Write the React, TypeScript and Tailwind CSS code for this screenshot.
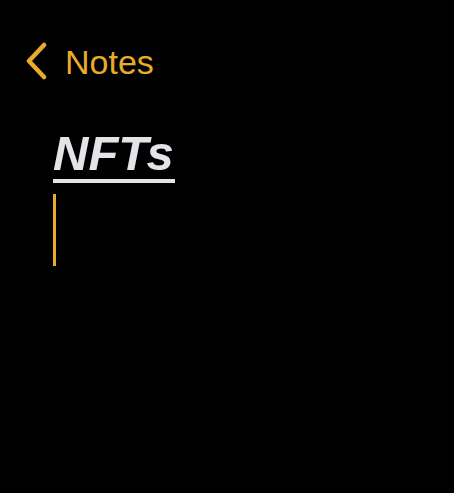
import React from 'react';

const App: React.FC = () => {
  return (
    <div
      className="w-[454px] h-[493px] bg-black overflow-hidden"
      style={{ fontFamily: '"Liberation Sans", Arial, sans-serif' }}
    >
      {/* Nav bar */}
      <div className="flex items-center pl-[24px] pt-[43px] h-[82px]">
        <svg width="26" height="40" viewBox="0 0 26 40" fill="none" className="-mt-[2px]">
          <path
            d="M20 3 L5 19 L20 35"
            stroke="#e9ab2b"
            strokeWidth="4.5"
            strokeLinecap="round"
            strokeLinejoin="round"
          />
        </svg>
        <span className="ml-[15px] text-[34px] leading-none text-[#e9ab2b] -mt-[1px]">Notes</span>
      </div>

      {/* Note body */}
      <div className="pl-[53px] pt-[47px]">
        <div className="inline-block">
          <h1 className="text-[49px] leading-none font-bold italic text-[#e3e3e8]">NFTs</h1>
          <div className="h-[4px] bg-[#e3e3e8] mt-[1px] mr-[-1px]" />
        </div>
        <div className="w-[3px] h-[72px] bg-[#e8ab2b] mt-[11px]" />
      </div>
    </div>
  );
};

export default App;
